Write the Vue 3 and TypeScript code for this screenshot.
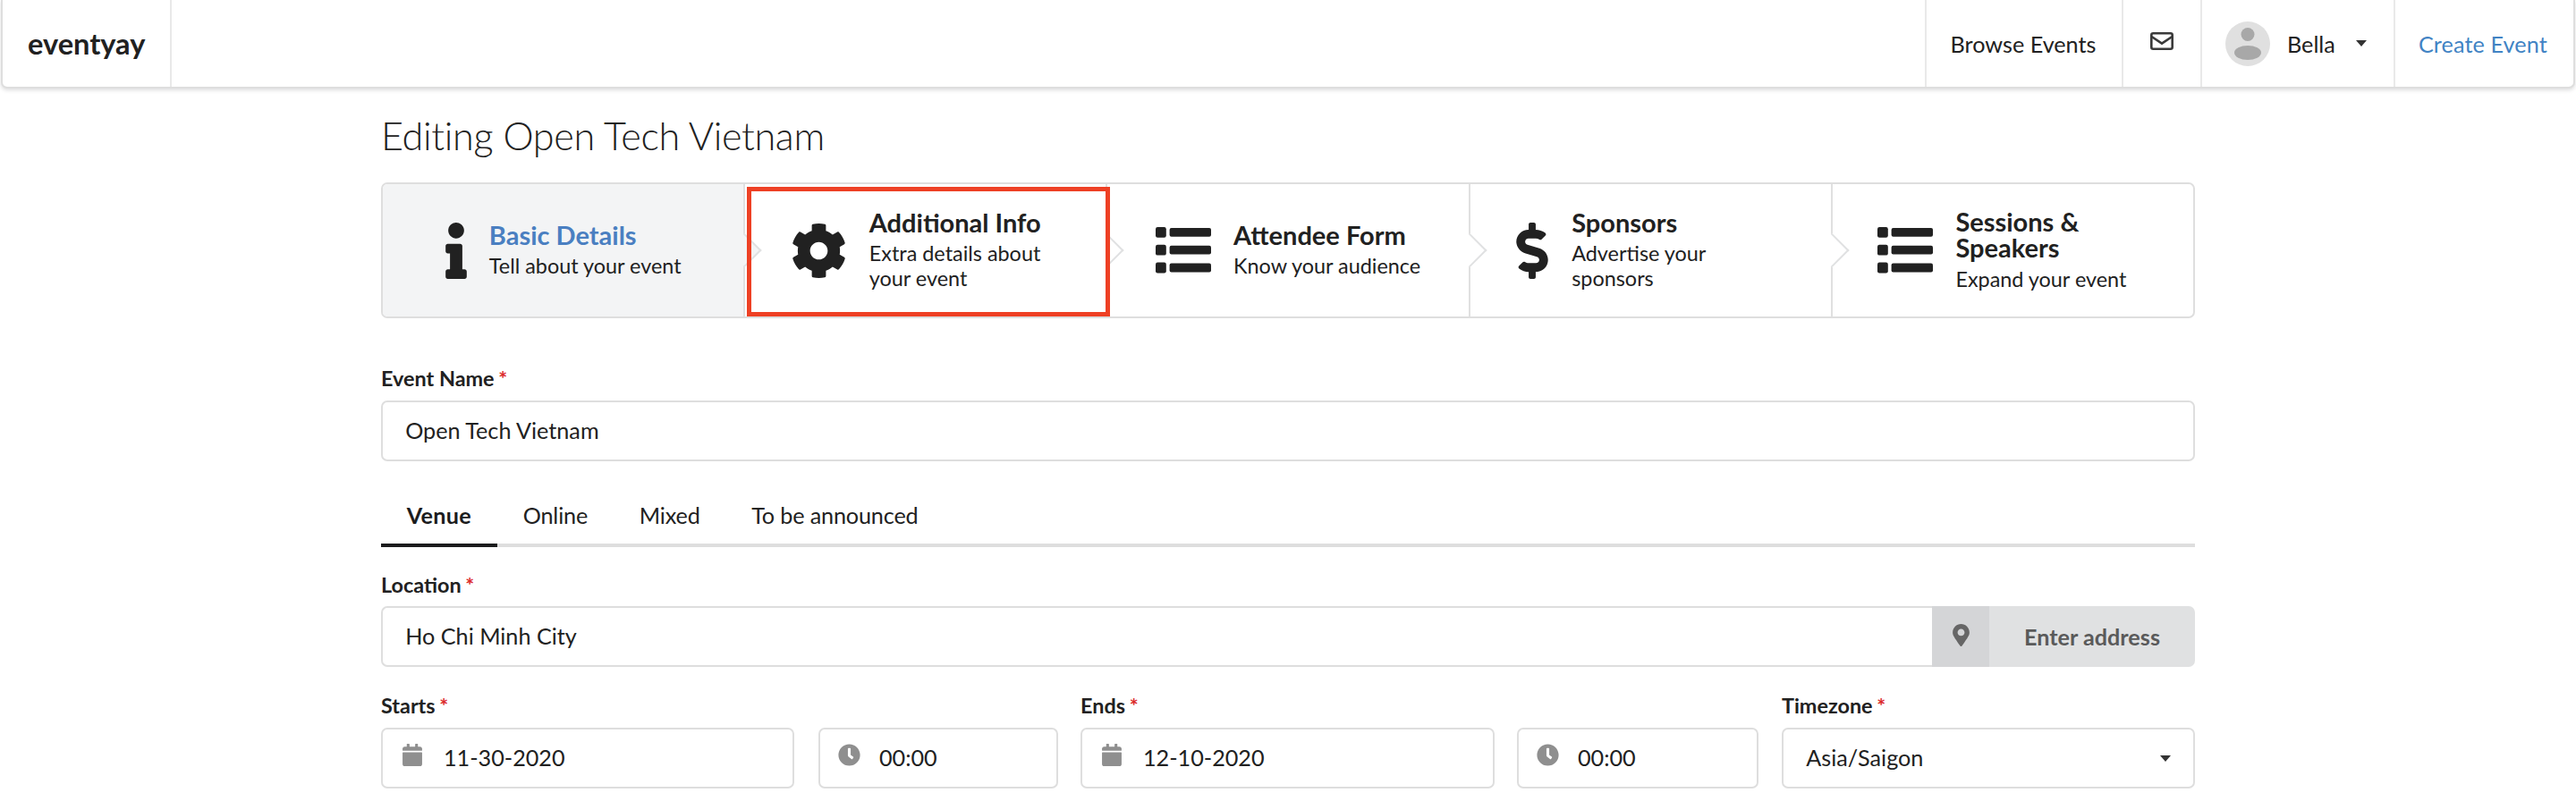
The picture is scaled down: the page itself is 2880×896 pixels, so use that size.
<template>
  <div class="page">
    <header class="navbar">
      <a class="nav-item logo">eventyay</a>
      <div class="nav-right">
        <a class="nav-item browse">Browse Events</a>
        <a class="nav-item mail">
          <svg class="mail-icon" viewBox="0 0 26 20">
            <rect x="1.3" y="1.3" width="23.4" height="17.4" rx="2" />
            <polyline points="1.6,5 13,12.6 24.4,5" />
          </svg>
        </a>
        <a class="nav-item user">
          <svg class="avatar" viewBox="0 0 50 50">
            <circle cx="25" cy="25" r="25" fill="#e0e0e0" />
            <circle cx="25" cy="14.5" r="7.5" fill="#a8a8a8" />
            <ellipse cx="25" cy="35" rx="15" ry="8" fill="#a8a8a8" />
          </svg>
          <span class="user-name">Bella</span>
          <span class="caret" />
        </a>
        <a class="nav-item create">Create Event</a>
      </div>
    </header>

    <main class="content">
      <h2 class="title">Editing Open Tech Vietnam</h2>

      <div class="steps">
        <div v-for="step in steps" :key="step.title" class="step" :class="{ 'step--active': step.active }">
          <svg
            class="step-icon"
            :viewBox="step.viewBox"
            :style="{ width: step.boxWidth + 'px', height: step.height + 'px' }"
          >
            <template v-if="step.list">
              <template v-for="y in listRows" :key="y">
                <rect x="0" :y="y" width="11.8" height="11.8" rx="2.2" />
                <rect x="15.6" :y="y + 1" width="46.4" height="9.8" rx="2" />
              </template>
            </template>
            <path v-else :d="step.path" />
          </svg>
          <div class="step-text">
            <div class="step-title">{{ step.title }}</div>
            <div class="step-desc">{{ step.desc }}</div>
          </div>
          <div v-if="step.highlight" class="highlight" />
        </div>
      </div>

      <div class="field event-name">
        <label class="label">Event Name<span class="req">*</span></label>
        <div class="input"><span class="value">Open Tech Vietnam</span></div>
      </div>

      <nav class="tabs">
        <a v-for="(tab, i) in tabs" :key="tab" class="tab" :class="{ 'tab--active': i === 0 }">{{ tab }}</a>
      </nav>

      <div class="field location">
        <label class="label">Location<span class="req">*</span></label>
        <div class="action-input">
          <div class="input grow"><span class="value">Ho Chi Minh City</span></div>
          <button class="address-btn">
            <span class="address-icon">
              <svg class="marker" viewBox="0 0 384 512"><path :d="icons.marker" /></svg>
            </span>
            <span class="address-label">Enter address</span>
          </button>
        </div>
      </div>

      <div class="when">
        <div class="when-group starts">
          <label class="label">Starts<span class="req">*</span></label>
          <div class="pair">
            <div class="input date">
              <svg class="cal" viewBox="0 0 448 512"><path :d="icons.calendar" /></svg>
              <span class="value">11-30-2020</span>
            </div>
            <div class="input time">
              <svg class="clock" viewBox="0 0 512 512"><path :d="icons.clock" /></svg>
              <span class="value">00:00</span>
            </div>
          </div>
        </div>
        <div class="when-group ends">
          <label class="label">Ends<span class="req">*</span></label>
          <div class="pair">
            <div class="input date">
              <svg class="cal" viewBox="0 0 448 512"><path :d="icons.calendar" /></svg>
              <span class="value">12-10-2020</span>
            </div>
            <div class="input time">
              <svg class="clock" viewBox="0 0 512 512"><path :d="icons.clock" /></svg>
              <span class="value">00:00</span>
            </div>
          </div>
        </div>
        <div class="when-group zone">
          <label class="label">Timezone<span class="req">*</span></label>
          <div class="input select">
            <span class="value">Asia/Saigon</span>
            <span class="caret" />
          </div>
        </div>
      </div>
    </main>
  </div>
</template>

<script setup lang="ts">
interface Step {
  title: string
  desc: string
  viewBox: string
  boxWidth: number
  height: number
  path?: string
  list?: boolean
  active?: boolean
  highlight?: boolean
}

const icons = {
  info: 'M20 424.229h20V279.771H20c-11.046 0-20-8.954-20-20V212c0-11.046 8.954-20 20-20h112c11.046 0 20 8.954 20 20v212.229h20c11.046 0 20 8.954 20 20V492c0 11.046-8.954 20-20 20H20c-11.046 0-20-8.954-20-20v-47.771c0-11.046 8.954-20 20-20zM96 0C56.235 0 24 32.235 24 72s32.235 72 72 72 72-32.235 72-72S135.764 0 96 0z',
  cog: 'M487.4 315.7l-42.6-24.6c4.3-23.2 4.3-47 0-70.2l42.6-24.6c4.9-2.8 7.1-8.6 5.5-14-11.1-35.6-30-67.8-54.7-94.6-3.8-4.1-10-5.1-14.8-2.3L380.8 110c-17.9-15.4-38.5-27.3-60.8-35.1V25.8c0-5.6-3.9-10.5-9.4-11.7-36.7-8.2-74.3-7.8-109.2 0-5.5 1.2-9.4 6.1-9.4 11.7V75c-22.2 7.9-42.8 19.8-60.8 35.1L88.7 85.5c-4.9-2.8-11-1.9-14.8 2.3-24.7 26.7-43.6 58.9-54.7 94.6-1.7 5.4.6 11.2 5.5 14L67.3 221c-4.3 23.2-4.3 47 0 70.2l-42.6 24.6c-4.9 2.8-7.1 8.6-5.5 14 11.1 35.6 30 67.8 54.7 94.6 3.8 4.1 10 5.1 14.8 2.3l42.6-24.6c17.9 15.4 38.5 27.3 60.8 35.1v49.2c0 5.6 3.9 10.5 9.4 11.7 36.7 8.2 74.3 7.8 109.2 0 5.5-1.2 9.4-6.1 9.4-11.7v-49.2c22.2-7.9 42.8-19.8 60.8-35.1l42.6 24.6c4.9 2.8 11 1.9 14.8-2.3 24.7-26.7 43.6-58.9 54.7-94.6 1.5-5.5-.7-11.3-5.6-14.1zM256 336c-44.1 0-80-35.9-80-80s35.9-80 80-80 80 35.9 80 80-35.9 80-80 80z',
  dollar: 'M209.2 233.4l-108-31.6C88.7 198.2 80 186.5 80 173.5c0-16.3 13.2-29.5 29.5-29.5h66.3c12.2 0 24.2 3.7 34.2 10.5 6.1 4.1 14.3 3.1 19.5-2l34.8-34c7.1-6.9 6.1-18.4-1.8-24.5C238 74.8 207.4 64.1 176 64V16c0-8.8-7.2-16-16-16h-32c-8.8 0-16 7.2-16 16v48h-2.5C45.8 64-5.4 118.7.5 183.6c4.2 46.1 39.4 83.6 83.8 96.6l102.5 30c12.5 3.7 21.2 15.3 21.2 28.3 0 16.3-13.2 29.5-29.5 29.5h-66.3C100 368 88 364.3 78 357.5c-6.1-4.1-14.3-3.1-19.5 2l-34.8 34c-7.1 6.9-6.1 18.4 1.8 24.5 24.5 19.2 55.1 29.9 86.5 30v48c0 8.8 7.2 16 16 16h32c8.8 0 16-7.2 16-16v-48.2c46.6-.9 90.3-28.6 105.7-72.7 21.5-61.6-14.6-124.8-72.5-141.7z',
  marker: 'M172.268 501.67C26.97 291.031 0 256.016 0 192 0 85.961 85.961 0 192 0s192 85.961 192 192c0 64.016-26.97 99.031-172.268 309.67-9.535 13.774-29.93 13.773-39.464 0zM192 272c44.183 0 80-35.817 80-80s-35.817-80-80-80-80 35.817-80 80 35.817 80 80 80z',
  calendar: 'M12 192h424c6.6 0 12 5.4 12 12v260c0 26.5-21.5 48-48 48H48c-26.5 0-48-21.5-48-48V204c0-6.6 5.4-12 12-12zm436-44v-36c0-26.5-21.5-48-48-48h-48V12c0-6.6-5.4-12-12-12h-40c-6.6 0-12 5.4-12 12v52H160V12c0-6.6-5.4-12-12-12h-40c-6.6 0-12 5.4-12 12v52H48C21.5 64 0 85.5 0 112v36c0 6.6 5.4 12 12 12h424c6.6 0 12-5.4 12-12z',
  clock: 'M256,8C119,8,8,119,8,256S119,504,256,504,504,393,504,256,393,8,256,8Zm92.49,313h0l-20,25a16,16,0,0,1-22.49,2.5h0l-67-49.72a40,40,0,0,1-15-31.23V112a16,16,0,0,1,16-16h32a16,16,0,0,1,16,16V256l58,42.5A16,16,0,0,1,348.49,321Z',
}

const listRows = [0, 19.8, 39.6]

const steps: Step[] = [
  { title: 'Basic Details', desc: 'Tell about your event', viewBox: '0 0 192 512', boxWidth: 24, height: 63, path: icons.info, active: true },
  { title: 'Additional Info', desc: 'Extra details about your event', viewBox: '0 0 512 512', boxWidth: 63, height: 63, path: icons.cog, highlight: true },
  { title: 'Attendee Form', desc: 'Know your audience', viewBox: '0 0 62 52', boxWidth: 62, height: 52, list: true },
  { title: 'Sponsors', desc: 'Advertise your sponsors', viewBox: '0 0 288 512', boxWidth: 38, height: 63, path: icons.dollar },
  { title: 'Sessions & Speakers', desc: 'Expand your event', viewBox: '0 0 62 52', boxWidth: 62, height: 52, list: true },
]

const tabs = ['Venue', 'Online', 'Mixed', 'To be announced']
</script>

<style>
html,
body {
  background: #fff;
}
</style>

<style scoped>
.page {
  width: 2880px;
  height: 896px;
  overflow: hidden;
  font-family: Lato, 'Liberation Sans', sans-serif;
  font-size: 25.2px;
  color: #212121;
}

.navbar {
  box-sizing: border-box;
  display: flex;
  justify-content: space-between;
  height: 99px;
  margin: 0 1px;
  background: #fff;
  border: 2px solid #dedede;
  border-top: none;
  border-radius: 0 0 7px 7px;
  box-shadow: 0 2px 4px rgba(34, 36, 38, 0.15);
}

.nav-item {
  box-sizing: border-box;
  display: flex;
  align-items: center;
  height: 100%;
  border-left: 2px solid #e9e9e9;
}

.logo {
  width: 189px;
  padding-left: 28px;
  border-left: none;
  border-right: 2px solid #e9e9e9;
  font-size: 32.6px;
  font-weight: 700;
}

.nav-right {
  display: flex;
}

.browse {
  width: 220px;
  padding-right: 2px;
  justify-content: center;
}

.mail {
  width: 88px;
  justify-content: center;
}

.mail-icon {
  width: 26px;
  height: 20px;
  margin-top: -5px;
  fill: none;
  stroke: #3a3a3a;
  stroke-width: 2.6;
}

.user {
  width: 216px;
  padding-left: 26px;
}

.avatar {
  width: 50px;
  height: 50px;
}

.user-name {
  margin-left: 19px;
}

.user .caret {
  margin-left: 23px;
}

.caret {
  width: 0;
  height: 0;
  border-left: 6px solid transparent;
  border-right: 6px solid transparent;
  border-top: 7px solid #333;
}

.create {
  width: 201px;
  padding-left: 26px;
  color: #4183c4;
  letter-spacing: 0.1px;
}

.content {
  width: 2028px;
  margin-left: 426px;
}

.title {
  margin: 24px 0 0;
  font-size: 43.2px;
  font-weight: 300;
  line-height: 56px;
  letter-spacing: -0.35px;
}

.steps {
  box-sizing: border-box;
  display: flex;
  height: 152px;
  margin-top: 25px;
  border: 2px solid #dedede;
  border-radius: 7px;
}

.step {
  box-sizing: border-box;
  position: relative;
  flex: 1;
  display: flex;
  align-items: center;
  justify-content: center;
  padding: 0 50.4px;
  min-width: 0;
  border-right: 2px solid #e0e0e0;
}

.step:last-child {
  border-right: none;
}

.step::after {
  content: '';
  position: absolute;
  top: 50%;
  right: -15px;
  z-index: 2;
  width: 27px;
  height: 27px;
  box-sizing: border-box;
  background: #fff;
  border: solid #e0e1e2;
  border-width: 2px 2px 0 0;
  transform: translateY(-50%) rotate(45deg);
}

.step:last-child::after {
  display: none;
}

.step--active {
  background: #f3f4f5;
  border-radius: 5px 0 0 5px;
}

.step--active::after {
  background: #f3f4f5;
}

.step--active .step-title {
  color: #4a7fc1;
}

.step-icon {
  flex: none;
  margin-right: 25.2px;
  fill: #212121;
}

.step-title {
  font-size: 29px;
  font-weight: 700;
  line-height: 28.8px;
}

.step-desc {
  margin-top: 6px;
  font-size: 23.4px;
  line-height: 28px;
}

.highlight {
  position: absolute;
  inset: 3px -5px 0 2px;
  z-index: 3;
  border: 5px solid #ee4024;
}

.field {
  display: flex;
  flex-direction: column;
}

.event-name {
  margin-top: 52px;
}

.label {
  font-size: 23.4px;
  font-weight: 700;
  line-height: 30px;
}

.req {
  display: inline-block;
  margin-left: 0.2em;
  vertical-align: top;
  color: #db2828;
}

.event-name .input {
  margin-top: 10px;
}

.input {
  box-sizing: border-box;
  display: flex;
  align-items: center;
  height: 68px;
  padding: 0 25.2px;
  background: #fff;
  border: 2px solid #dedede;
  border-radius: 7px;
}

.value {
  margin-top: -3px;
  white-space: nowrap;
}

.tabs {
  box-sizing: border-box;
  display: flex;
  height: 66px;
  margin-top: 30px;
  border-bottom: 4px solid #dedede;
}

.tab {
  display: flex;
  align-items: center;
  padding: 0 28.8px 3px;
  margin-bottom: -4px;
  border-bottom: 4px solid transparent;
  letter-spacing: -0.15px;
}

.tab--active {
  font-weight: 700;
  color: #1b1c1d;
  border-bottom-color: #1b1c1d;
  letter-spacing: 0.3px;
}

.location {
  margin-top: 27px;
}

.action-input {
  display: flex;
  margin-top: 9px;
}

.grow {
  flex: 1;
  border-right: none;
  border-radius: 7px 0 0 7px;
}

.address-btn {
  display: flex;
  width: 294px;
  height: 68px;
  padding: 0;
  border: none;
  background: #e0e1e2;
  border-radius: 0 7px 7px 0;
  font: inherit;
  font-weight: 700;
  color: #5a5a5a;
}

.address-icon {
  display: flex;
  align-items: center;
  justify-content: center;
  width: 64px;
  height: 100%;
  background: #d4d5d7;
}

.marker {
  width: 19px;
  height: 25px;
  margin-top: -3px;
  fill: #666;
}

.address-label {
  flex: 1;
  align-self: center;
  text-align: center;
}

.when {
  display: flex;
  margin-top: 28px;
}

.when-group {
  display: flex;
  flex-direction: column;
}

.starts {
  width: 757px;
  margin-right: 25px;
}

.ends {
  width: 758px;
  margin-right: 26px;
}

.zone {
  flex: 1;
}

.pair {
  display: flex;
  justify-content: space-between;
  margin-top: 10px;
}

.zone .input {
  margin-top: 10px;
}

.date {
  width: 462px;
  padding-left: 22px;
}

.ends .date {
  width: 463px;
}

.time {
  width: 268px;
  padding-left: 20px;
}

.ends .time {
  width: 270px;
}

.cal {
  width: 22px;
  height: 25px;
  margin-right: 24px;
  margin-top: -7px;
  fill: #8f8f8f;
}

.clock {
  width: 25px;
  height: 25px;
  margin-right: 21px;
  margin-top: -7px;
  fill: #8f8f8f;
}

.select {
  justify-content: space-between;
}
</style>
